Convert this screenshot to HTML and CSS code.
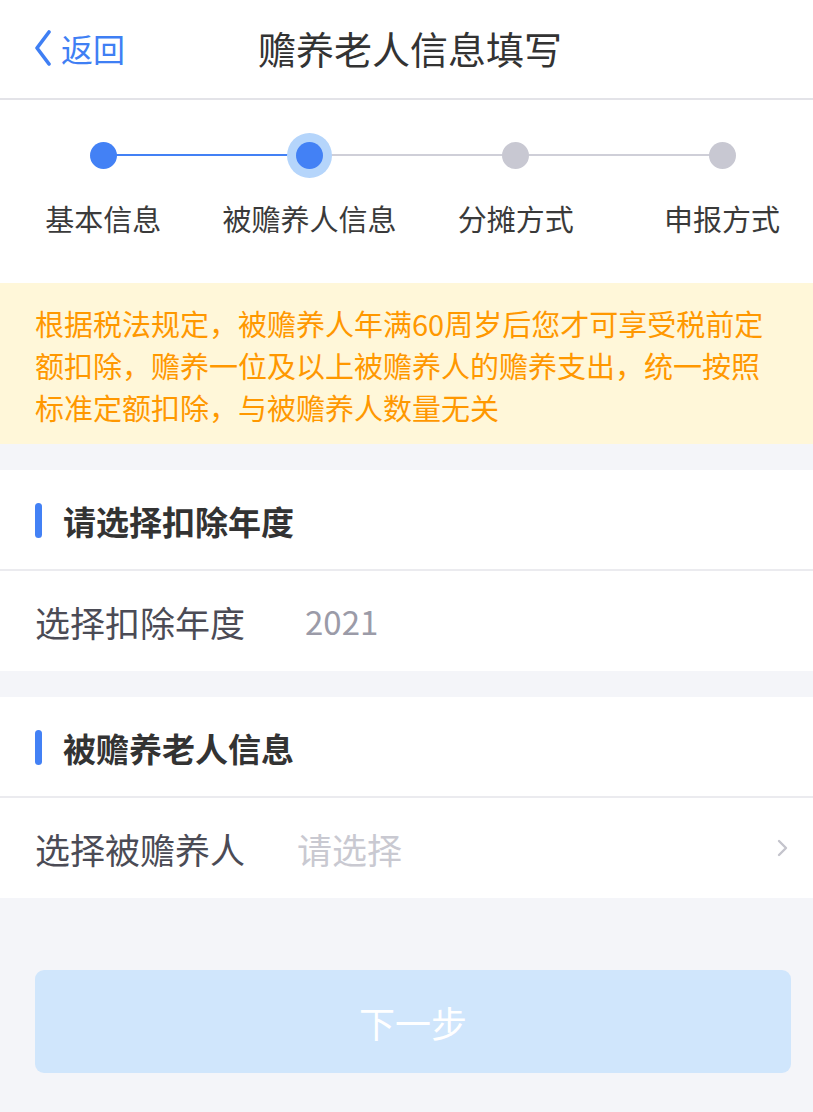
FILE: index.html
```html
<!DOCTYPE html>
<html lang="zh-CN">
<head>
<meta charset="utf-8">
<title>赡养老人信息填写</title>
<link rel="stylesheet" href="styles.css">
</head>
<body>
<div class="page">
  <header class="nav">
    <a class="nav-back">
      <svg class="nav-back-icon" width="20" height="36" viewBox="0 0 20 36"><path d="M16 2 L4 18 L16 34" fill="none" stroke="#3f7ff4" stroke-width="3.6" stroke-linecap="round" stroke-linejoin="round"/></svg>
      <span>返回</span>
    </a>
    <h1 class="nav-title">赡养老人信息填写</h1>
    <span class="nav-spacer"></span>
  </header>

  <section class="steps">
    <div class="step done right-active">
      <span class="step-dot"></span>
      <span class="step-label">基本信息</span>
    </div>
    <div class="step current left-active">
      <span class="step-dot"></span>
      <span class="step-label">被赡养人信息</span>
    </div>
    <div class="step">
      <span class="step-dot"></span>
      <span class="step-label">分摊方式</span>
    </div>
    <div class="step last">
      <span class="step-dot"></span>
      <span class="step-label">申报方式</span>
    </div>
  </section>

  <p class="notice">根据税法规定，被赡养人年满60周岁后您才可享受税前定额扣除，赡养一位及以上被赡养人的赡养支出，统一按照标准定额扣除，与被赡养人数量无关</p>

  <section class="card">
    <div class="card-head"><span class="card-bar"></span><span>请选择扣除年度</span></div>
    <div class="row">
      <span class="row-label">选择扣除年度</span>
      <span class="row-value year">2021</span>
    </div>
  </section>

  <section class="card">
    <div class="card-head"><span class="card-bar"></span><span>被赡养老人信息</span></div>
    <div class="row">
      <span class="row-label">选择被赡养人</span>
      <span class="row-value placeholder">请选择</span>
      <svg class="row-arrow" width="14" height="18" viewBox="0 0 14 18"><path d="M3 2 L10 9 L3 16" fill="none" stroke="#c4c4cc" stroke-width="2.4" stroke-linecap="round" stroke-linejoin="round"/></svg>
    </div>
  </section>

  <button class="next-btn" type="button">下一步</button>
</div>
</body>
</html>
```

FILE: styles.css
```css
* { box-sizing: border-box; }
html, body { margin: 0; padding: 0; }
body {
  background: #f4f5f9;
  font-family: "Noto Sans CJK SC", "PingFang SC", "Noto Sans", sans-serif;
  color: #333;
}
.page {
  width: 813px;
  min-height: 1112px;
  overflow: hidden;
  display: flex;
  flex-direction: column;
}

/* nav */
.nav {
  height: 100px;
  background: #fff;
  border-bottom: 2px solid #e3e3e8;
  display: grid;
  grid-template-columns: 1fr auto 1fr;
  align-items: center;
  padding: 0 0 2px 0;
}
.nav-back {
  margin-left: 33px;
  display: flex;
  align-items: center;
  gap: 8px;
  color: #3f7ff4;
  font-size: 32px;
  line-height: 1;
}
.nav-title {
  margin: 0;
  font-size: 38px;
  font-weight: 400;
  color: #333;
  line-height: 1;
  padding-left: 7px;
}

/* steps */
.steps {
  background: #fff;
  display: grid;
  grid-template-columns: repeat(4, 206.3px);
  padding: 42px 0 44px;
  height: 183px;
}
.step {
  position: relative;
  display: flex;
  flex-direction: column;
  align-items: center;
}
.step::before,
.step::after {
  content: "";
  position: absolute;
  top: 12px;
  height: 2px;
  width: 50%;
  background: #cfcfd8;
}
.step::before { left: 0; }
.step::after { right: 0; }
.step:first-child::before { display: none; }
.step.last::after { display: none; }
.step.right-active::after,
.step.left-active::before { background: #4381f5; }
.step-dot {
  position: relative;
  z-index: 1;
  width: 27px;
  height: 27px;
  border-radius: 50%;
  background: #c8c8d2;
}
.step.done .step-dot,
.step.current .step-dot { background: #4381f5; }
.step.current .step-dot { box-shadow: 0 0 0 9px #b5d5fb; }
.step-label {
  margin-top: 29px;
  font-size: 29px;
  line-height: 40px;
  color: #3a3a3a;
  white-space: nowrap;
}

/* notice */
.notice {
  margin: 0;
  background: #fff7d9;
  color: #ff9800;
  font-size: 29px;
  line-height: 42px;
  padding: 19px 35px 16px;
}

/* cards */
.card {
  background: #fff;
  margin-top: 26px;
}
.card-head {
  height: 101px;
  display: flex;
  align-items: center;
  gap: 21px;
  padding-left: 35px;
  padding-top: 2px;
  font-size: 33px;
  font-weight: 700;
  color: #333;
  border-bottom: 2px solid #ebebef;
}
.card-bar {
  width: 7px;
  height: 35px;
  border-radius: 4px;
  background: #4381f5;
}
.row {
  height: 100px;
  display: flex;
  align-items: center;
  padding: 0 23px 0 35px;
}
.row-label {
  width: 266px;
  font-size: 35px;
  color: #4b4b55;
}
.row-value {
  flex: 1;
  font-size: 33px;
  color: #9b9ba8;
}
.row-value.year { padding-left: 4px; }
.row-value.placeholder { color: #c9c9d1; font-size: 35px; margin-left: -4px; }
.row-arrow { flex: none; }

/* button */
.next-btn {
  margin: 72px 22px 0 35px;
  height: 103px;
  border: none;
  border-radius: 9px;
  background: #d0e6fc;
  color: #fff;
  font-family: inherit;
  font-size: 36px;
}
```
